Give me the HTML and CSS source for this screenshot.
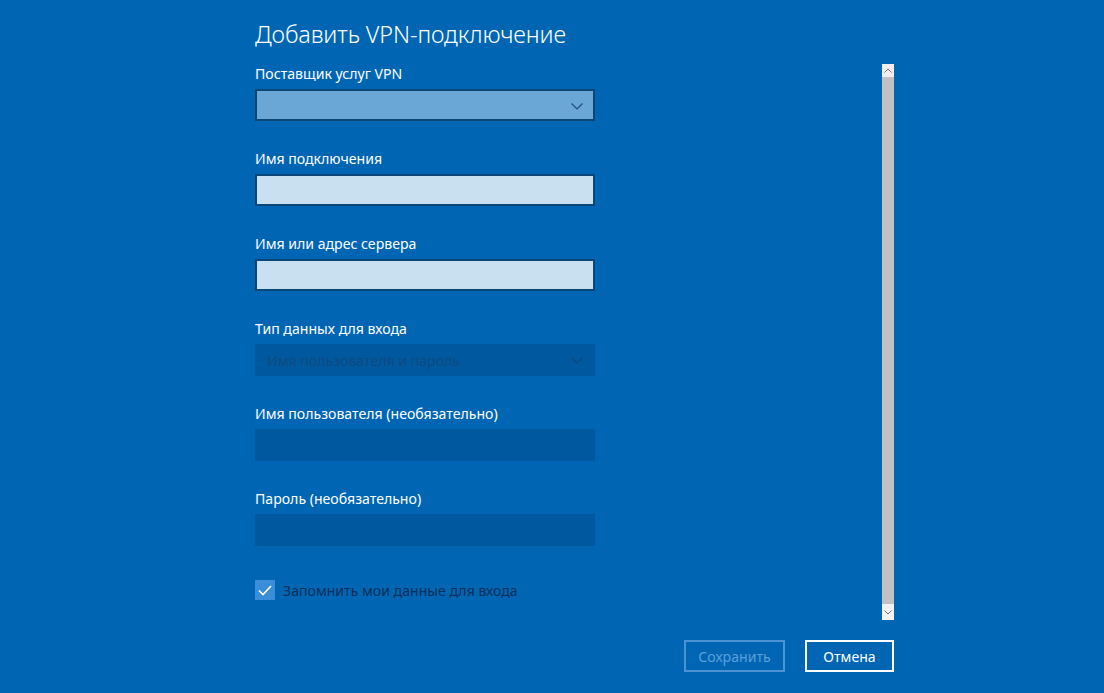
FILE: index.html
```html
<!DOCTYPE html>
<html lang="ru">
<head>
  <meta charset="UTF-8" />
  <title>Добавить VPN-подключение</title>
  <link rel="stylesheet" href="styles.css">
</head>
<body>
  <div class="dialog">
    <h1 class="title">Добавить VPN-подключение</h1>
    <div class="scroll-area">
      <div class="form">
        <div class="group">
          <div class="label">Поставщик услуг VPN</div>
          <div class="field select">
            <svg class="chevron" width="12" height="7" viewBox="0 0 12 7"><path d="M0.5 0.5 L6 6 L11.5 0.5" fill="none" stroke="#1f4f7c" stroke-width="1.2"/></svg>
          </div>
        </div>
        <div class="group">
          <div class="label">Имя подключения</div>
          <div class="field input"></div>
        </div>
        <div class="group">
          <div class="label">Имя или адрес сервера</div>
          <div class="field input"></div>
        </div>
        <div class="group">
          <div class="label">Тип данных для входа</div>
          <div class="field disabled">
            <span class="placeholder">Имя пользователя и пароль</span>
            <svg class="chevron" width="12" height="7" viewBox="0 0 12 7"><path d="M0.5 0.5 L6 6 L11.5 0.5" fill="none" stroke="#0d4a7e" stroke-width="1.2"/></svg>
          </div>
        </div>
        <div class="group">
          <div class="label">Имя пользователя (необязательно)</div>
          <div class="field disabled"></div>
        </div>
        <div class="group">
          <div class="label">Пароль (необязательно)</div>
          <div class="field disabled"></div>
        </div>
        <label class="check">
          <span class="box">
            <svg width="14" height="11" viewBox="0 0 14 11"><path d="M1 5.5 L5 9.5 L13 1" fill="none" stroke="#fff" stroke-width="1.6"/></svg>
          </span>
          <span class="check-text">Запомнить мои данные для входа</span>
        </label>
      </div>
      <div class="scrollbar">
        <div class="arrow">
          <svg width="8" height="5" viewBox="0 0 8 5"><path d="M0.5 4.5 L4 1 L7.5 4.5" fill="none" stroke="#777" stroke-width="1"/></svg>
        </div>
        <div class="track"></div>
        <div class="arrow bottom">
          <svg width="8" height="5" viewBox="0 0 8 5"><path d="M0.5 0.5 L4 4 L7.5 0.5" fill="none" stroke="#777" stroke-width="1"/></svg>
        </div>
      </div>
    </div>
    <div class="buttons">
      <button class="btn save">Сохранить</button>
      <button class="btn cancel">Отмена</button>
    </div>
  </div>
</body>
</html>
```

FILE: styles.css
```css
html, body {
  height: 100%;
}
body {
  margin: 0;
  background: #0066b4;
  color: #fff;
  font-family: "Noto Sans", "Open Sans", sans-serif;
  overflow: hidden;
}
.dialog {
  margin-left: 255px;
  width: 640px;
  padding-top: 18px;
}
.title {
  margin: 0 0 14px;
  font-size: 23.4px;
  font-weight: 300;
  line-height: 32px;
  letter-spacing: -0.1px;
}
.scroll-area {
  display: flex;
  height: 556px;
}
.form {
  width: 340px;
}
.group {
  margin-bottom: 28px;
}
.label {
  font-size: 14.1px;
  line-height: 20px;
  margin-bottom: 5px;
}
.field {
  box-sizing: border-box;
  height: 32px;
  position: relative;
  display: flex;
  align-items: center;
}
.select {
  background: #6aa6d6;
  border: 2px solid #0c4677;
}
.input {
  background: #c9e0f1;
  border: 2px solid #0c4677;
}
.disabled {
  background: #00599e;
}
.chevron {
  position: absolute;
  right: 10px;
  top: 12px;
}
.disabled .chevron {
  top: 13px;
  right: 12px;
}
.placeholder {
  margin-left: 12px;
  font-size: 14.1px;
  color: #0d4a80;
}
.check {
  display: flex;
  align-items: center;
  margin-top: 34px;
  gap: 8px;
}
.box {
  width: 20px;
  height: 20px;
  background: #3a8ed8;
  display: flex;
  align-items: center;
  justify-content: center;
}
.check-text {
  font-size: 14.1px;
  color: #0b2e56;
}
.scrollbar {
  margin-left: auto;
  margin-right: 1px;
  width: 12px;
  display: flex;
  flex-direction: column;
}
.arrow {
  height: 13px;
  background: #eeeeee;
  display: flex;
  align-items: center;
  justify-content: center;
}
.arrow.bottom {
  height: 16px;
  background: #f2f2f2;
}
.track {
  flex: 1;
  background: #c2c2c2;
}
.buttons {
  display: flex;
  justify-content: flex-end;
  gap: 20px;
  margin-top: 20px;
  padding-right: 1px;
}
.btn {
  box-sizing: border-box;
  height: 32px;
  background: transparent;
  font-family: inherit;
  font-size: 14.1px;
  padding: 0;
}
.save {
  width: 101px;
  border: 2px solid #4b93d3;
  color: #5c9fdc;
}
.cancel {
  width: 89px;
  border: 2px solid #fff;
  color: #fff;
}
```
